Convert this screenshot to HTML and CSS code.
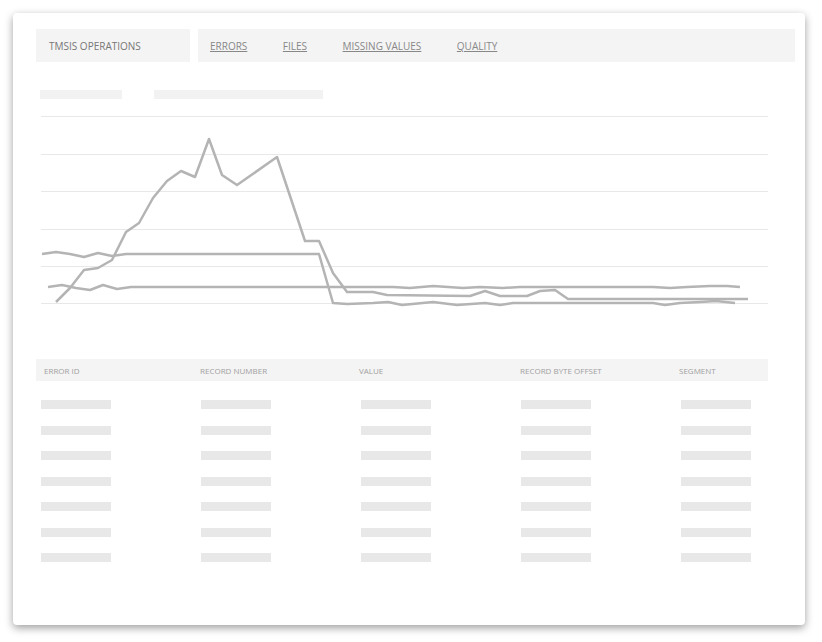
FILE: index.html
```html
<!DOCTYPE html>
<html lang="en">
<head>
  <meta charset="UTF-8">
  <title>TMSIS Operations - Errors</title>
  <link rel="stylesheet" href="styles.css">
</head>
<body>
  <div class="card">
    <div class="nav">
      <div class="brand">TMSIS OPERATIONS</div>
      <div class="links">
        <a href="#">ERRORS</a>
        <a href="#">FILES</a>
        <a href="#">MISSING VALUES</a>
        <a href="#">QUALITY</a>
      </div>
    </div>

    <div class="main">
      <div class="titles">
        <span class="ph ph-short"></span>
        <span class="ph ph-long"></span>
      </div>

      <svg class="chart" width="732" height="210" viewBox="0 0 732 210">
        <g class="grid">
          <line x1="5" y1="6.5" x2="732" y2="6.5"/>
          <line x1="5" y1="44.5" x2="732" y2="44.5"/>
          <line x1="5" y1="81.5" x2="732" y2="81.5"/>
          <line x1="5" y1="119.5" x2="732" y2="119.5"/>
          <line x1="5" y1="156.5" x2="732" y2="156.5"/>
          <line x1="5" y1="193.5" x2="732" y2="193.5"/>
        </g>
        <g class="series">
          <polyline points="12,177 26,175 40,178 54,180 67,175 81,179 95,177 357,177 374,178 397,176 427,178 444,177 467,178 484,177 617,177 634,178 651,177 674,176 691,176 704,177"/>
          <polyline points="6,144 20,142 34,144 48,147 62,143 76,146 90,144 283,144 297,193 311,194 337,193 352,192 366,195 397,192 421,195 449,193 464,195 477,193 617,193 629,195 644,193 664,192 680,191 699,193"/>
          <polyline points="20,192 34,178 48,160 62,158 76,150 90,122 103,113 117,88 131,71 145,61 159,67 173,29 186,65 201,75 241,47 269,131 283,131 297,163 311,182 324,182 337,182 351,185 434,186 449,181 464,186 491,186 504,181 519,180 532,189 712,189"/>
        </g>
      </svg>

      <div class="table">
        <div class="thead">
          <span>ERROR ID</span>
          <span>RECORD NUMBER</span>
          <span>VALUE</span>
          <span>RECORD BYTE OFFSET</span>
          <span>SEGMENT</span>
        </div>
        <div class="tbody" id="rows"></div>
      </div>
    </div>
  </div>

  <script>
    // placeholder rows while the error list loads
    const rows = document.getElementById('rows');
    for (let i = 0; i < 7; i++) {
      const row = document.createElement('div');
      row.className = 'row';
      for (let j = 0; j < 5; j++) {
        const cell = document.createElement('span');
        cell.className = 'cell';
        row.appendChild(cell);
      }
      rows.appendChild(row);
    }
  </script>
</body>
</html>
```

FILE: styles.css
```css
body {
  margin: 0;
  background: #fff;
  font-family: 'Open Sans', 'Liberation Sans', sans-serif;
}

.card {
  margin: 13px;
  width: 792px;
  height: 612px;
  box-sizing: border-box;
  padding: 16px 10px 0 23px;
  background: #fff;
  border-radius: 4px;
  box-shadow: 0 3px 8px rgba(0, 0, 0, 0.38);
}

/* top navigation */
.nav {
  display: flex;
  gap: 8px;
  height: 33px;
}

.brand {
  width: 154px;
  box-sizing: border-box;
  padding-left: 13px;
  display: flex;
  align-items: center;
  background: #f4f4f4;
  color: #777;
  font-size: 10px;
}

.links {
  flex: 1;
  display: flex;
  align-items: center;
  gap: 35.5px;
  padding-left: 12px;
  background: #f4f4f4;
}

.links a {
  color: #888;
  font-size: 10px;
  text-decoration: underline;
}

.main {
  width: 732px;
}

/* placeholder title bars */
.titles {
  display: flex;
  gap: 32px;
  margin-top: 28px;
  padding-left: 4px;
}

.ph {
  display: block;
  height: 9px;
  background: #f2f2f2;
}

.ph-short {
  width: 82px;
}

.ph-long {
  width: 169px;
}

.chart {
  display: block;
  margin-top: 11px;
}

.grid line {
  stroke: #e8e8e8;
  stroke-width: 1;
}

.series polyline {
  fill: none;
  stroke: #b4b4b4;
  stroke-width: 2.5;
  stroke-linejoin: round;
}

/* errors table */
.table {
  margin-top: 39px;
}

.thead {
  display: grid;
  grid-template-columns: 156px 159px 161px 159px auto;
  align-items: center;
  height: 22px;
  padding-left: 8px;
  background: #f4f4f4;
  color: #a0a0a0;
  font-size: 8px;
}

.tbody {
  padding-top: 19px;
  padding-left: 5px;
}

.row {
  display: grid;
  grid-template-columns: repeat(5, 160px);
  height: 25.5px;
}

.cell {
  display: block;
  width: 70px;
  height: 9px;
  background: #e8e8e8;
}
```
